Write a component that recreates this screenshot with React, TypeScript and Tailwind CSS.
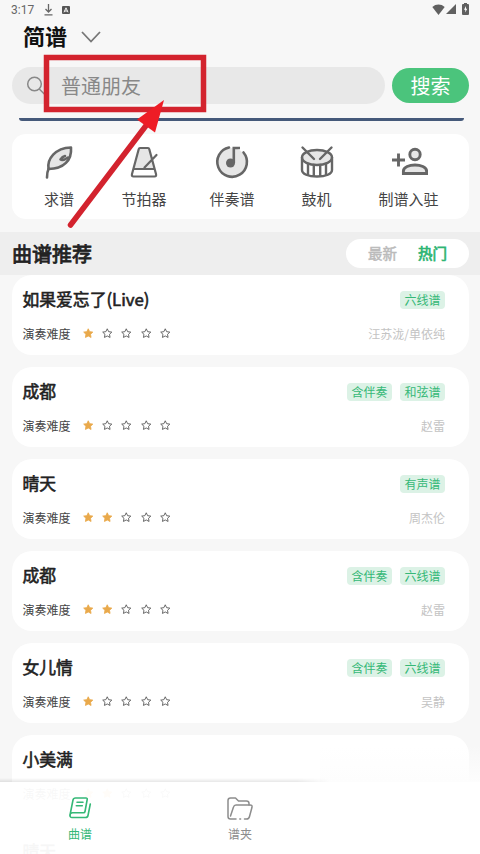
import React from "react";

interface Song {
  id: number;
  title: string;
  level: number;
  tags: string[];
  artist: string;
}

const songs: Song[] = [
  { id: 1, title: "如果爱忘了(Live)", level: 1, tags: ["六线谱"], artist: "汪苏泷/单依纯" },
  { id: 2, title: "成都", level: 1, tags: ["含伴奏", "和弦谱"], artist: "赵雷" },
  { id: 3, title: "晴天", level: 2, tags: ["有声谱"], artist: "周杰伦" },
  { id: 4, title: "成都", level: 2, tags: ["含伴奏", "六线谱"], artist: "赵雷" },
  { id: 5, title: "女儿情", level: 1, tags: ["含伴奏", "六线谱"], artist: "吴静" },
  { id: 6, title: "小美满", level: 2, tags: [], artist: "" },
  { id: 7, title: "晴天", level: 2, tags: [], artist: "" },
];

const STAR = "M6 .9l1.6 3.3 3.6.5-2.6 2.5.6 3.6L6 9.1l-3.2 1.7.6-3.6L.8 4.7l3.6-.5z";

const Star: React.FC<{ filled: boolean }> = ({ filled }) => (
  <svg viewBox="0 0 12 12" className="size-[10.5px]">
    <path d={STAR} fill={filled ? "#e9a94b" : "none"} stroke={filled ? "#e9a94b" : "#555"} strokeWidth="1" />
  </svg>
);

const FeatherIcon = () => (
  <svg width="36" height="36" viewBox="0 0 36 36" fill="none" stroke="#666" strokeWidth="2.6" strokeLinecap="round" strokeLinejoin="round">
    <path d="M7.500 25C6 15 14 4 30 3.500C31 16 23 25 7.500 25z" fill="#e6e6e6" />
    <path d="M7.500 25Q6 28 6 33.500M27 13.500Q22 17 19.500 15.500Q21.500 12.500 24 12" />
  </svg>
);

const MetronomeIcon = () => (
  <svg width="36" height="36" viewBox="0 0 36 36" fill="none" stroke="#666" strokeWidth="2.200" strokeLinecap="round" strokeLinejoin="round">
    <path d="M14 4h8q1 0 1.300 1.200L28.500 25H8L12.700 5.200Q13 4 14 4z" fill="#e6e6e6" stroke="none" />
    <path d="M14 4h8q1 0 1.300 1.200L30 30q.6 2.500-1.500 2.500h-21Q5.400 32.500 6 30L12.700 5.200Q13 4 14 4zM8 25h20M18.500 23.500L30.500 11" />
  </svg>
);

const NoteIcon = () => (
  <svg width="36" height="36" viewBox="0 0 36 36" fill="none" stroke="#666" strokeWidth="2.600">
    <circle cx="18" cy="18" r="14" fill="#e6e6e6" stroke="none" />
    <path d="M15 3.500A14.800 14.800 0 1 0 29.500 8.500" strokeLinecap="round" />
    <path d="M19.800 19V4h6.200" />
    <circle cx="16.500" cy="19" r="4.500" fill="#666" stroke="none" />
  </svg>
);

const DrumIcon = () => (
  <svg width="36" height="36" viewBox="0 0 36 36" fill="none" stroke="#666" strokeWidth="2.400" strokeLinecap="round">
    <ellipse cx="18" cy="13.500" rx="15" ry="7.500" fill="#e6e6e6" />
    <path d="M3 13.500v12.500c0 4 6 6.500 15 6.500S33 30 33 26V13.500M9 20v10.500M14.800 21v11M21.200 21v11M27 20v10.500" />
    <path d="M3.500 3.500L15 15M32.500 3.500L21 15" />
  </svg>
);

const JoinIcon = () => (
  <svg width="38" height="36" viewBox="0 0 38 36" fill="none" stroke="#666" strokeWidth="2.900">
    <circle cx="25" cy="10.500" r="5.200" fill="#e6e6e6" />
    <path d="M13.400 29.500v-2.500c0-4 6-6 11.600-6s11.600 2 11.600 6v2.500z" fill="#e6e6e6" />
    <path d="M2 16h13M8.500 9.500v13" />
  </svg>
);

const BookIcon = () => (
  <svg width="24" height="24" viewBox="0 0 24 24" fill="none" stroke="#35b877" strokeWidth="1.600" strokeLinecap="round" strokeLinejoin="round">
    <path d="M7.500 2h10.500q1.500 0 1.200 1.500L17 15.500q-.2 1.200-1.500 1.200H4.500q-2.500 0-2.500 2.300L5 4q.4-2 2.500-2z" />
    <path d="M22.300 8l-2.300 11.500q-.4 2-2.500 2H4q-2.200 0-2-2.500M9 6.300h6M8.300 9.800h6" />
  </svg>
);

const FolderIcon = () => (
  <svg width="28" height="26" viewBox="0 0 28 26" fill="none" stroke="#8d8d8d" strokeWidth="1.500" strokeLinecap="round" strokeLinejoin="round">
    <path d="M10 23H4.500Q2 23 2 20.500V4.500Q2 2 4.500 2h5l3 3H20.500q2.500 0 2.500 2.500v1.500" />
    <path d="M4.500 20L7.500 11q.6-2 2.500-2h14q2.500 0 2 2.300l-2.500 9.200Q23 23 20.500 23H18.500M13.800 23h.8" />
  </svg>
);

const shortcuts = [
  { label: "求谱", icon: <FeatherIcon />, width: "w-[94px]" },
  { label: "节拍器", icon: <MetronomeIcon />, width: "w-[76px]" },
  { label: "伴奏谱", icon: <NoteIcon />, width: "w-[100px]" },
  { label: "鼓机", icon: <DrumIcon />, width: "w-[69px]" },
  { label: "制谱入驻", icon: <JoinIcon />, width: "w-[115px]" },
];

const StatusBar = () => (
  <div className="flex h-5 shrink-0 items-center justify-between pr-[11px] pl-[11px] text-[#666]">
    <div className="flex items-center">
      <span className="w-[33px] font-[Roboto] text-[12px] leading-none">3:17</span>
      <svg width="9" height="12" viewBox="0 0 9 12" fill="none" stroke="#666" strokeWidth="1.300">
        <path d="M4.500 0v8M1.500 5l3 3 3-3M.5 10.800h8" />
      </svg>
      <svg width="8" height="8" viewBox="0 0 8 8" className="ml-[9px]">
        <rect width="8" height="8" rx="1" fill="#555" />
        <path d="M2 6.300L4 1.800l2 4.500M2.600 5h2.800" stroke="#f7f7f7" fill="none" />
      </svg>
    </div>
    <div className="flex items-center pb-[2px]">
      <svg width="13" height="11" viewBox="0 0 13 11" fill="#606060">
        <path d="M6.500 11L.3 3C4-.3 9-.3 12.700 3z" />
      </svg>
      <svg width="10" height="10" viewBox="0 0 10 10" className="ml-px" fill="#606060">
        <path d="M10 0v10H0z" />
      </svg>
      <svg width="7" height="12" viewBox="0 0 7 12" className="ml-[6px]">
        <path d="M2 1V0h3v1h1q1 0 1 1v9q0 1-1 1H1q-1 0-1-1V2q0-1 1-1z" fill="#606060" />
        <path d="M4 3L2 6.700h1.300V9.500L5.200 5.700H4z" fill="#fff" />
      </svg>
    </div>
  </div>
);

const SongCard: React.FC<{ song: Song }> = ({ song }) => (
  <div className="flex h-20 shrink-0 flex-col rounded-[20px] bg-white pt-[13px] pr-6 pl-[10.5px]">
    <div className="flex h-6 items-center justify-between">
      <h3 className="text-[16.8px] font-normal text-[#222] [-webkit-text-stroke:0.6px_#222]">{song.title}</h3>
      <div className="flex gap-2">
        {song.tags.map((tag) => (
          <span key={tag} className="flex h-[18px] w-[45px] items-center justify-center rounded bg-[#dcf2e6] text-[12px] text-[#35b877]">
            {tag}
          </span>
        ))}
      </div>
    </div>
    <div className="mt-[11.5px] flex h-5 items-center justify-between text-[12px]">
      <div className="flex items-center">
        <span className="w-[60.5px] text-[#444]">演奏难度</span>
        <div className="flex gap-[8.7px]">
          {[1, 2, 3, 4, 5].map((n) => (
            <Star key={n} filled={n <= song.level} />
          ))}
        </div>
      </div>
      <span className="text-[#c3c3c3]">{song.artist}</span>
    </div>
  </div>
);

const App: React.FC = () => {
  return (
    <div className="relative flex h-[854px] w-[480px] flex-col overflow-hidden bg-[#f7f7f7] font-['Noto_Sans_CJK_SC',sans-serif]">
      <StatusBar />

      <div className="flex h-8 shrink-0 items-center pl-[23px]">
        <h1 className="pb-[2px] text-[22px] leading-none font-bold text-[#111]">简谱</h1>
        <svg width="20" height="12" viewBox="0 0 20 12" className="mt-px ml-[14px]" fill="none" stroke="#777" strokeWidth="1.800">
          <path d="M1 1l9 9.500L19 1" />
        </svg>
      </div>

      <div className="mt-[15px] flex shrink-0 items-center gap-[7px] pl-3">
        <div className="flex h-[37px] w-[373px] items-center rounded-full bg-[#e8e8e8] pl-[14px]">
          <svg width="19" height="19" viewBox="0 0 19 19" fill="none" stroke="#888" strokeWidth="1.500">
            <circle cx="8.500" cy="8" r="6.800" />
            <path d="M13.300 13l5 5" />
          </svg>
          <span className="ml-4 text-[20px] leading-none text-[#888]">普通朋友</span>
        </div>
        <button className="h-[35px] w-[77px] rounded-full bg-[#4bc47c] text-[20px] leading-none text-white">搜索</button>
      </div>

      <div className="mt-[14px] ml-[19px] h-[3px] w-[445px] shrink-0 rounded-b-[12px] bg-[#45597a]" />

      <div className="mt-[13px] mr-[11px] ml-3 flex h-[85px] shrink-0 rounded-[14px] bg-white">
        {shortcuts.map((item) => (
          <div key={item.label} className={`flex shrink-0 flex-col items-center pt-[10px] ${item.width}`}>
            {item.icon}
            <span className="mt-[9px] text-[15px] leading-5 text-[#444]">{item.label}</span>
          </div>
        ))}
      </div>

      <div className="mt-[13px] flex h-[43px] shrink-0 items-center justify-between bg-[#eeeeee] pr-[11px] pl-3">
        <h2 className="text-[20px] leading-none font-normal text-[#222] [-webkit-text-stroke:0.8px_#222]">曲谱推荐</h2>
        <div className="flex h-[29px] w-[123px] items-center rounded-full bg-white pb-px pl-[22px] text-[14.5px]">
          <span className="w-[50px] text-[#bbb] [-webkit-text-stroke:0.5px_#bbb]">最新</span>
          <span className="text-[#2fb574] [-webkit-text-stroke:0.7px_#2fb574]">热门</span>
        </div>
      </div>

      <div className="flex shrink-0 flex-col gap-3 pr-[11px] pl-3">
        {songs.map((song) => (
          <SongCard key={song.id} song={song} />
        ))}
      </div>

      <div className="absolute top-[745px] right-0 h-[109px] w-[160px] bg-linear-to-b from-transparent to-[#fdfdfd] to-35%" />
      <nav className="absolute bottom-0 left-0 flex h-[72px] w-full bg-[#fffffff5]">
        <div className="absolute -top-1 left-0 h-1 w-[330px] bg-linear-to-b from-transparent to-[#00000018] mask-r-from-90%" />
        <div className="flex w-[160px] flex-col items-center pt-[14px] text-[#35b877]">
          <BookIcon />
          <span className="mt-[5px] text-[12px] leading-[18px]">曲谱</span>
        </div>
        <div className="flex w-[160px] flex-col items-center pt-[14px] text-[#8d8d8d]">
          <FolderIcon />
          <span className="mt-[3px] text-[12px] leading-[18px]">谱夹</span>
        </div>
      </nav>

      {/* highlight around the search field */}
      <svg width="480" height="240" viewBox="0 0 480 240" className="pointer-events-none absolute top-0 left-0">
        <rect x="46.500" y="57.500" width="157" height="52" fill="none" stroke="#d3232e" strokeWidth="5.500" />
        <path d="M70.500 225L148 123" stroke="#d3232e" strokeWidth="5.500" strokeLinecap="round" />
        <path d="M164 100L137 119.500L155 132.500z" fill="#ee1c25" />
      </svg>
    </div>
  );
};

export default App;
